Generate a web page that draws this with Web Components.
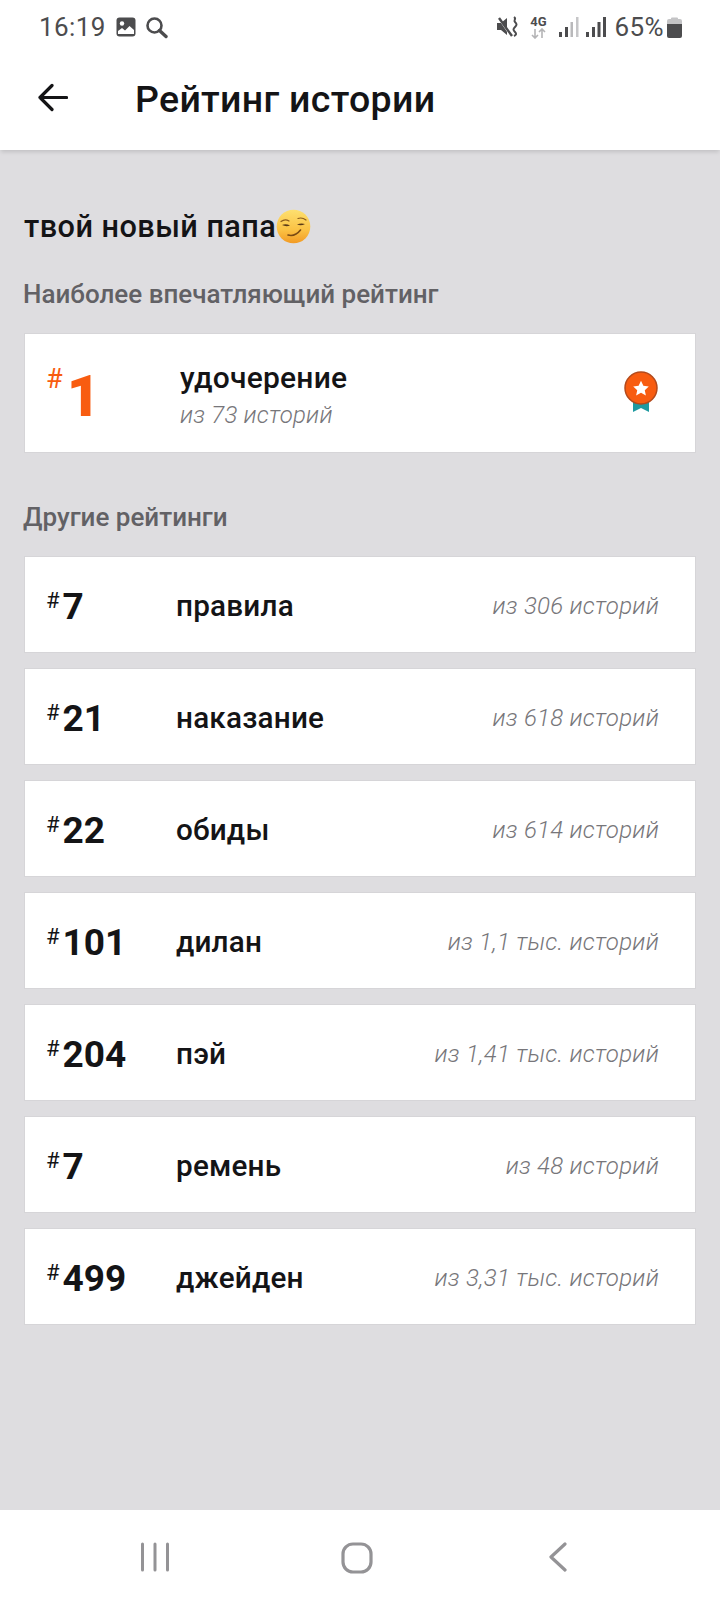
<!DOCTYPE html>
<html lang="ru">
<head>
<meta charset="utf-8">
<title>Рейтинг истории</title>
<style>
  html, body { margin: 0; padding: 0; }
  body { width: 720px; height: 1600px; background: #dedde0; font-family: Roboto, "Liberation Sans", sans-serif; color: #141416; }
  #pagina { display: flex; flex-direction: column; height: 1600px; }
</style>
</head>
<body>
<div id="pagina">
  <barra-estado></barra-estado>
  <barra-titulo>Рейтинг истории</barra-titulo>
  <zona-rating>
    <h-historia>твой новый папа</h-historia>
    <h-seccion style="--arriba:33px">Наиболее впечатляющий рейтинг</h-seccion>
    <tarjeta-top puesto="1" etiqueta="удочерение" total="из 73 историй"></tarjeta-top>
    <h-seccion style="--arriba:47px">Другие рейтинги</h-seccion>
    <lista-rating>
      <fila-rating puesto="7" etiqueta="правила" total="из 306 историй"></fila-rating>
      <fila-rating puesto="21" etiqueta="наказание" total="из 618 историй"></fila-rating>
      <fila-rating puesto="22" etiqueta="обиды" total="из 614 историй"></fila-rating>
      <fila-rating puesto="101" etiqueta="дилан" total="из 1,1 тыс. историй"></fila-rating>
      <fila-rating puesto="204" etiqueta="пэй" total="из 1,41 тыс. историй"></fila-rating>
      <fila-rating puesto="7" etiqueta="ремень" total="из 48 историй"></fila-rating>
      <fila-rating puesto="499" etiqueta="джейден" total="из 3,31 тыс. историй"></fila-rating>
    </lista-rating>
  </zona-rating>
  <barra-nav></barra-nav>
</div>

<script>
// Barra de estado del teléfono
class BarraEstado extends HTMLElement {
  constructor() {
    super();
    this.attachShadow({mode: 'open'});
    this.shadowRoot.innerHTML = `
      <style>
        :host { display: flex; align-items: center; height: 52px; box-sizing: border-box; padding: 2px 38px 0 39px; background: #fff; color: #4c4c4e; font-size: 26px; letter-spacing: .4px; }
        svg { display: block; flex: none; }
        .der { margin-left: auto; display: flex; align-items: center; }
        .red { margin-left: 11px; width: 18px; display: flex; flex-direction: column; align-items: center; }
        .red span { font-size: 13px; font-weight: 700; line-height: 13px; letter-spacing: 0; }
      </style>
      <span>16:19</span>
      <svg style="margin-left:10px" width="20" height="20" viewBox="0 0 20 20"><rect width="19" height="19" x=".5" y=".5" rx="3" fill="#4c4c4e"/><circle cx="6" cy="6.5" r="2.2" fill="#fff"/><path d="M2 17v-3l4-3 3 2.500 4.500-4.500 4.500 4v4z" fill="#fff"/></svg>
      <svg style="margin-left:9px" width="23" height="23" viewBox="0 0 23 23" fill="none" stroke="#4c4c4e"><circle cx="9.500" cy="9.500" r="7" stroke-width="2.600"/><path d="M14.500 14.500l6.500 6" stroke-width="3.400" stroke-linecap="round"/></svg>
      <div class="der">
        <svg width="22" height="22" viewBox="0 0 22 22"><path d="M0 7h4l6-5v17l-6-5H0z" fill="#4c4c4e"/><path d="M1 1l13 19" stroke="#fff" stroke-width="2"/><path d="M2 2l13 18" stroke="#4c4c4e" stroke-width="2.400"/><path d="M17 1c3 2-1 3 1 5s2 3 0 5-2 3 0 5 1 3-1 4" fill="none" stroke="#4c4c4e" stroke-width="2"/></svg>
        <div class="red"><span>4G</span><svg width="18" height="11" viewBox="0 0 18 11"><path d="M5 1v9M2 7l3 3 3-3M12 10V1M9 4l3-3 3 3" fill="none" stroke="#b4b4b6" stroke-width="1.600"/></svg></div>
        <svg style="margin-left:11px" width="20" height="22" viewBox="0 0 20 22"><rect x="0" y="16" width="3" height="5" fill="#4c4c4e"/><rect x="6" y="11" width="3" height="10" fill="#4c4c4e"/><rect x="11.500" y="6" width="2.500" height="15" fill="#b9b9bb"/><rect x="17" y="1" width="2.500" height="20" fill="#c6c6c8"/></svg>
        <svg style="margin-left:7px" width="20" height="22" viewBox="0 0 20 22" fill="#4c4c4e"><rect x="0" y="16" width="3" height="5"/><rect x="6" y="11" width="3" height="10"/><rect x="11.500" y="6" width="3" height="15"/><rect x="17" y="1" width="3" height="20"/></svg>
        <span style="margin-left:9px">65%</span>
        <svg style="margin-left:3px" width="15" height="22" viewBox="0 0 15 22"><path d="M4 2.500q0-1 1-1h5q1 0 1 1V3h2q2 0 2 2v4H0V5q0-2 2-2h2z" fill="#c4c4c6"/><path d="M0 8h15v12q0 2-2 2H2q-2 0-2-2z" fill="#4c4c4e"/></svg>
      </div>
    `;
  }
}

// Cabecera con la flecha y el título
class BarraTitulo extends HTMLElement {
  constructor() {
    super();
    this.attachShadow({mode: 'open'});
    this.shadowRoot.innerHTML = `
      <style>
        :host { display: flex; align-items: center; height: 98px; box-sizing: border-box; background: #fff; box-shadow: 0 3px 4px -1px rgba(0,0,0,.13); position: relative; z-index: 1; }
        svg { display: block; margin-left: 37px; flex: none; margin-top: -7px; }
        span { margin-left: 67px; font-size: 37.500px; font-weight: 500; color: #141416; letter-spacing: .3px; position: relative; top: -2px; }
      </style>
      <svg width="31" height="31" viewBox="0 0 31 31" fill="none" stroke="#141416" stroke-width="3.200" stroke-linecap="round" stroke-linejoin="round"><path d="M29.500 15.500H3M15 3.500L3 15.500 15 27.500"/></svg>
      <span><slot></slot></span>
    `;
  }
}

class ZonaRating extends HTMLElement {
  constructor() {
    super();
    this.attachShadow({mode: 'open'});
    this.shadowRoot.innerHTML = `
      <style>
        :host { display: flex; flex-direction: column; flex: 1; min-height: 0; padding: 58px 24px 0; background: #dedde0; }
      </style>
      <slot></slot>
    `;
  }
}

// Título de la historia con el emoji
class HHistoria extends HTMLElement {
  constructor() {
    super();
    this.attachShadow({mode: 'open'});
    this.shadowRoot.innerHTML = `
      <style>
        :host { display: flex; align-items: center; height: 36px; font-size: 30.700px; font-weight: 500; color: #141416; letter-spacing: .45px; }
        svg { display: block; flex: none; }
      </style>
      <slot></slot>
      <svg width="35" height="35" viewBox="0 0 35 35">
        <defs><linearGradient id="cara" x1="0" y1="0" x2="0" y2="1"><stop offset="0" stop-color="#fde070"/><stop offset=".6" stop-color="#fbc244"/><stop offset="1" stop-color="#f29a24"/></linearGradient></defs>
        <circle cx="17.500" cy="17.500" r="16.800" fill="url(#cara)"/>
        <path d="M5 12.500q4-3 8-.5M22 9.500q4-1.500 8 1.500" fill="none" stroke="#8a5a1c" stroke-width="1.200" stroke-linecap="round"/>
        <path d="M6 16q4-1.500 8 .5q-4 1.500-8-.5zM21 15.500q4-1.800 8-.5q-4 2.300-8 .5z" fill="#5a3a18"/>
        <path d="M12 26q7 2 12.500-5" fill="none" stroke="#7a4a14" stroke-width="1.600" stroke-linecap="round"/>
      </svg>
    `;
  }
}

class HSeccion extends HTMLElement {
  constructor() {
    super();
    this.attachShadow({mode: 'open'});
    this.shadowRoot.innerHTML = `
      <style>
        :host { display: block; margin: var(--arriba, 0) 0 0 -1px; height: 34px; line-height: 34px; font-size: 26px; font-weight: 500; color: #626165; }
      </style>
      <slot></slot>
    `;
  }
}

// Tarjeta grande del mejor puesto
class TarjetaTop extends HTMLElement {
  constructor() {
    super();
    this.attachShadow({mode: 'open'});
    let puesto = this.getAttribute('puesto');
    let etiqueta = this.getAttribute('etiqueta');
    let total = this.getAttribute('total');
    this.shadowRoot.innerHTML = `
      <style>
        :host { display: flex; align-items: center; height: 120px; margin-top: 22px; box-sizing: border-box; background: #fff; border: 1px solid #d6d5d8; color: #141416; }
        .puesto { width: 134px; margin-left: 21px; flex: none; display: flex; align-items: flex-start; color: #f85c10; }
        .almo { font-size: 27px; line-height: 30px; margin-top: 3px; }
        .num { font-size: 58px; font-weight: 900; line-height: 60px; margin-left: 4px; margin-top: 5px; }
        .txt { flex: 1; display: flex; flex-direction: column; padding-top: 5px; }
        .eti { font-size: 30px; font-weight: 500; line-height: 36px; letter-spacing: .2px; }
        .tot { font-size: 24px; font-weight: 300; font-style: italic; line-height: 32px; color: #77767a; margin-top: 3px; letter-spacing: .2px; }
        svg { display: block; flex: none; margin-right: 37px; margin-bottom: 2px; }
      </style>
      <div class="puesto"><span class="almo">#</span><span class="num">${puesto}</span></div>
      <div class="txt"><span class="eti">${etiqueta}</span><span class="tot">${total}</span></div>
      <svg width="34" height="42" viewBox="0 0 34 42">
        <path d="M9 26h16v15l-8-4-8 4z" fill="#1f9aa0"/>
        <circle cx="17" cy="17" r="16" fill="#f85c10" stroke="#b34a1c" stroke-width="1.500"/>
        <path transform="translate(17 17.500) scale(.74) translate(-17 -17)" d="M17 6.500l3.200 6.800 7.300.9-5.400 5 1.500 7.300-6.600-3.700-6.600 3.700 1.500-7.300-5.400-5 7.300-.9z" fill="#fff"/>
      </svg>
    `;
  }
}

class ListaRating extends HTMLElement {
  constructor() {
    super();
    this.attachShadow({mode: 'open'});
    this.shadowRoot.innerHTML = `
      <style>
        :host { display: flex; flex-direction: column; gap: 15px; margin-top: 22px; }
      </style>
      <slot></slot>
    `;
  }
}

class FilaRating extends HTMLElement {
  constructor() {
    super();
    this.attachShadow({mode: 'open'});
    let puesto = this.getAttribute('puesto');
    let etiqueta = this.getAttribute('etiqueta');
    let total = this.getAttribute('total');
    this.shadowRoot.innerHTML = `
      <style>
        :host { display: flex; align-items: center; height: 97px; box-sizing: border-box; padding-top: 5px; background: #fff; border: 1px solid #d6d5d8; color: #141416; }
        .puesto { width: 130px; margin-left: 21px; flex: none; display: flex; align-items: flex-start; }
        .almo { font-size: 22px; line-height: 26px; margin-top: 1px; font-weight: 400; }
        .num { font-size: 37px; font-weight: 700; line-height: 40px; margin-left: 3px; }
        .eti { font-size: 29.700px; font-weight: 500; letter-spacing: .2px; margin-bottom: 4px; }
        .tot { margin-left: auto; margin-right: 36px; margin-bottom: 2px; font-size: 24px; font-weight: 300; font-style: italic; color: #77767a; letter-spacing: .25px; }
      </style>
      <div class="puesto"><span class="almo">#</span><span class="num">${puesto}</span></div>
      <span class="eti">${etiqueta}</span>
      <span class="tot">${total}</span>
    `;
  }
}

// Botones de navegación de Android
class BarraNav extends HTMLElement {
  constructor() {
    super();
    this.attachShadow({mode: 'open'});
    this.shadowRoot.innerHTML = `
      <style>
        :host { display: grid; grid-template-columns: repeat(3, 202px); padding-left: 54px; flex: none; height: 90px; background: #fff; align-items: start; }
        svg { display: block; margin-top: 32px; justify-self: center; }
      </style>
      <svg width="30" height="30" viewBox="0 0 30 30" fill="none" stroke="#949396" stroke-width="3" stroke-linecap="round"><path d="M2.500 2v26M15 2v26M27.500 2v26"/></svg>
      <svg width="32" height="32" viewBox="0 0 32 32" fill="none" stroke="#949396" stroke-width="3.200"><rect x="2" y="2" width="28" height="28" rx="10"/></svg>
      <svg width="22" height="30" viewBox="0 0 22 30" fill="none" stroke="#949396" stroke-width="3.200" stroke-linecap="round" stroke-linejoin="round"><path d="M17 2L3 15l14 13"/></svg>
    `;
  }
}

window.customElements.define('barra-estado', BarraEstado);
window.customElements.define('barra-titulo', BarraTitulo);
window.customElements.define('zona-rating', ZonaRating);
window.customElements.define('h-historia', HHistoria);
window.customElements.define('h-seccion', HSeccion);
window.customElements.define('tarjeta-top', TarjetaTop);
window.customElements.define('lista-rating', ListaRating);
window.customElements.define('fila-rating', FilaRating);
window.customElements.define('barra-nav', BarraNav);
</script>
</body>
</html>
